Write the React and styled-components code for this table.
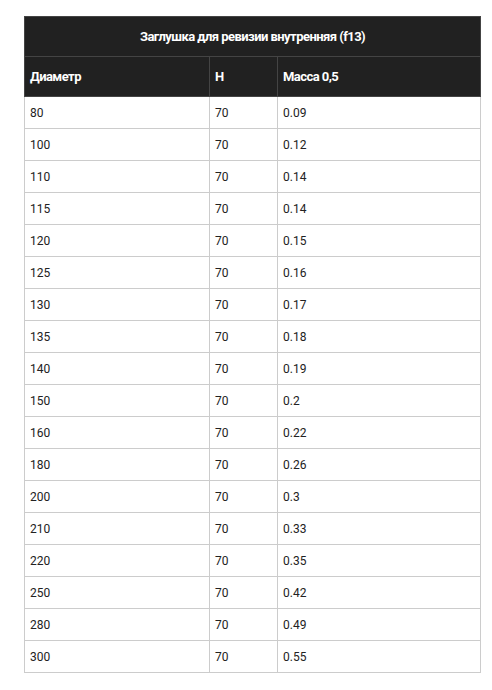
import React from 'react'
import styled, { createGlobalStyle } from 'styled-components'

const GlobalStyle = createGlobalStyle`
  body {
    margin: 0;
    background: #fff;
    font-family: Roboto, "Liberation Sans", sans-serif;
  }
`

const rows = [
  ['80', '70', '0.09'],
  ['100', '70', '0.12'],
  ['110', '70', '0.14'],
  ['115', '70', '0.14'],
  ['120', '70', '0.15'],
  ['125', '70', '0.16'],
  ['130', '70', '0.17'],
  ['135', '70', '0.18'],
  ['140', '70', '0.19'],
  ['150', '70', '0.2'],
  ['160', '70', '0.22'],
  ['180', '70', '0.26'],
  ['200', '70', '0.3'],
  ['210', '70', '0.33'],
  ['220', '70', '0.35'],
  ['250', '70', '0.42'],
  ['280', '70', '0.49'],
  ['300', '70', '0.55'],
]

const App = () => {
  return (
    <Page>
      <GlobalStyle />
      <Table>
        <colgroup>
          <Col $w={185} />
          <Col $w={68} />
          <Col $w={203} />
        </colgroup>
        <thead>
          <tr>
            <Title colSpan={3}>Заглушка для ревизии внутренняя (f13)</Title>
          </tr>
          <tr>
            <Head>Диаметр</Head>
            <Head>H</Head>
            <Head>Масса 0,5</Head>
          </tr>
        </thead>
        <tbody>
          {rows.map((r) => (
            <tr key={r[0]}>
              {r.map((c, i) => <Cell key={i}>{c}</Cell>)}
            </tr>
          ))}
        </tbody>
      </Table>
    </Page>
  )
}

export default App

const Page = styled.div`
  padding: 16px 12px 18px 24px;
`

const Table = styled.table`
  width: 456px;
  border-collapse: collapse;
  table-layout: fixed;
  border: 1px solid #cccccc;
`

const Col = styled.col`
  width: ${(p) => p.$w}px;
`

const Title = styled.th`
  height: 40px;
  padding: 0 5px;
  background: #212121;
  border: 1px solid #444;
  color: #fff;
  font-size: 13px;
  font-weight: 700;
  letter-spacing: -0.55px;
  text-align: center;
  box-sizing: border-box;
`

const Head = styled.th`
  height: 40px;
  padding: 0 5px;
  background: #212121;
  border: 1px solid #444;
  color: #fff;
  font-size: 13px;
  font-weight: 700;
  letter-spacing: -0.55px;
  text-align: left;
  box-sizing: border-box;
`

const Cell = styled.td`
  height: 32px;
  padding: 0 5px;
  border: 1px solid #cccccc;
  color: #222;
  font-size: 12px;
  text-align: left;
  box-sizing: border-box;
`
